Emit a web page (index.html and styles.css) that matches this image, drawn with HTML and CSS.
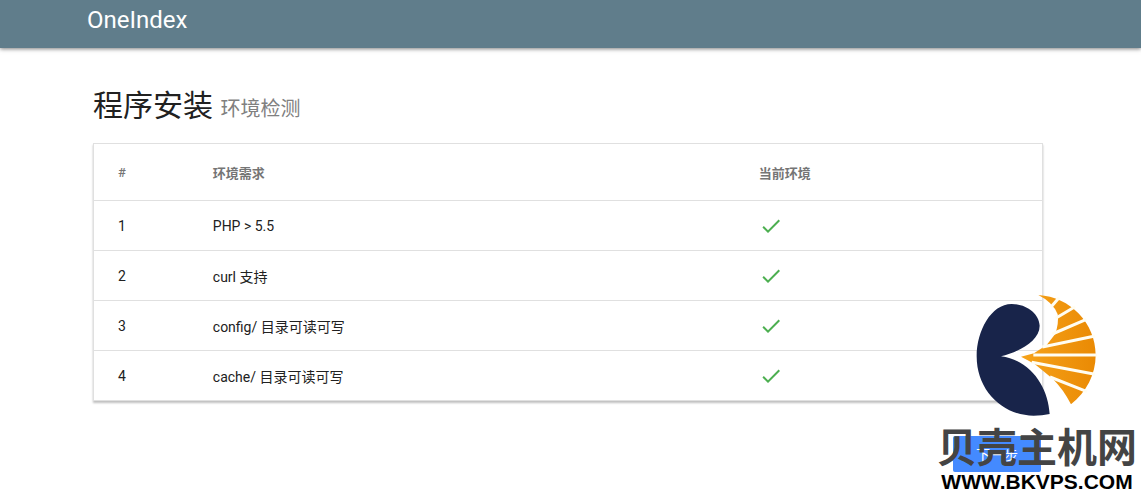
FILE: index.html
```html
<!DOCTYPE html>
<html lang="zh-CN">
<head>
    <meta charset="UTF-8">
    <meta name="viewport" content="width=device-width, initial-scale=1.0">
    <title>OneIndex</title>
    <link rel="stylesheet" href="styles.css">
</head>
<body>
    <header class="toolbar">
        <a href="#" class="title">OneIndex</a>
    </header>

    <main class="container">
        <h1>程序安装 <small>环境检测</small></h1>

        <table class="check-table">
            <thead>
                <tr>
                    <th class="col-num">#</th>
                    <th class="col-name">环境需求</th>
                    <th>当前环境</th>
                </tr>
            </thead>
            <tbody>
                <tr>
                    <td>1</td>
                    <td>PHP &gt; 5.5</td>
                    <td><svg class="icon" viewBox="0 0 24 24"><path d="M9 16.17L4.83 12l-1.42 1.41L9 19 21 7l-1.41-1.41z"/></svg></td>
                </tr>
                <tr>
                    <td>2</td>
                    <td>curl 支持</td>
                    <td><svg class="icon" viewBox="0 0 24 24"><path d="M9 16.17L4.83 12l-1.42 1.41L9 19 21 7l-1.41-1.41z"/></svg></td>
                </tr>
                <tr>
                    <td>3</td>
                    <td>config/ 目录可读可写</td>
                    <td><svg class="icon" viewBox="0 0 24 24"><path d="M9 16.17L4.83 12l-1.42 1.41L9 19 21 7l-1.41-1.41z"/></svg></td>
                </tr>
                <tr>
                    <td>4</td>
                    <td>cache/ 目录可读可写</td>
                    <td><svg class="icon" viewBox="0 0 24 24"><path d="M9 16.17L4.83 12l-1.42 1.41L9 19 21 7l-1.41-1.41z"/></svg></td>
                </tr>
            </tbody>
        </table>

        <div class="actions">
            <button type="button" class="btn">下一步</button>
        </div>
    </main>

    <!-- site watermark -->
    <div class="watermark">
        <svg class="watermark-logo" viewBox="0 0 420 420">
            <defs>
                <linearGradient id="shell" x1="0" y1="0" x2="1" y2="0">
                    <stop offset="0" stop-color="#f6a31a"/>
                    <stop offset="1" stop-color="#ea8a04"/>
                </linearGradient>
            </defs>
            <path fill="#18244a" d="M108 214C158 201 224 170 224 122C222 84 182 57 140 57C78 57 35 138 35 214C35 318 114 392 206 392Q232 392 254 387C250 310 200 226 108 214Z"/>
            <path fill="url(#shell)" d="M220 30C316 36 392 114 392 210C392 268 364 322 318 358Q296 314 263 281L208 236L168 215L207 205L245 180L270 148Q282 118 278 88Q264 52 220 30Z"/>
            <path stroke="#fffdf2" stroke-width="9" fill="none" d="M258 66L282 38M272 100L330 65M262 147L364 103M232 186L390 153M205 210H396M200 232L390 268M255 276L366 320"/>
        </svg>
        <div class="watermark-name">贝壳主机网</div>
        <div class="watermark-url">WWW.BKVPS.COM</div>
    </div>
</body>
</html>
```

FILE: styles.css
```css
body {
    margin: 0;
    font-family: Roboto, "Noto Sans CJK SC", sans-serif;
    font-size: 14px;
    color: #212121;
    background-color: #fff;
}
.toolbar {
    height: 48px;
    padding: 0 87px;
    background-color: #607d8b;
    box-shadow: 0 1px 4px rgba(0,0,0,0.5);
}
.title {
    font-size: 24px;
    line-height: 40px;
    color: #fff;
    text-decoration: none;
}
.container {
    margin: 0 98px 0 93px;
    padding-top: 34px;
}
h1 {
    margin: 0 0 13px;
    font-size: 30px;
    line-height: 48px;
    font-weight: 400;
}
h1 small {
    font-size: 20px;
    line-height: 20px;
    color: #808080;
}
.check-table {
    width: 100%;
    table-layout: fixed;
    border-collapse: separate;
    border-spacing: 0;
    border: 1px solid #e0e0e0;
    border-bottom: none;
    box-sizing: border-box;
    box-shadow: 0 2px 2px rgba(0,0,0,0.25);
}
.check-table th,
.check-table td {
    box-sizing: border-box;
    height: 50px;
    padding: 0 24px;
    text-align: left;
    border-bottom: 1px solid #e0e0e0;
}
.check-table th {
    height: 57px;
    font-size: 13px;
    font-weight: 700;
    color: #757575;
}
.check-table .col-num {
    width: 10%;
    font-weight: 500;
}
.check-table .col-name {
    width: 57.6%;
}
.icon {
    display: block;
    width: 24px;
    height: 24px;
    fill: #4caf50;
}
.actions {
    display: flex;
    justify-content: flex-end;
    padding: 35px 2px 0 0;
}
.btn {
    min-width: 88px;
    height: 36px;
    padding: 0 16px;
    border: none;
    border-radius: 2px;
    font-family: inherit;
    font-size: 14px;
    color: #fff;
    background-color: #448aff;
    cursor: pointer;
}
.watermark {
    position: absolute;
    top: 285px;
    right: 3px;
    width: 202px;
    text-align: center;
    pointer-events: none;
}
.watermark-logo {
    display: block;
    width: 140px;
    height: 140px;
    margin-left: 29px;
}
.watermark-name {
    font-size: 40px;
    line-height: 48px;
    font-weight: 700;
    white-space: nowrap;
    color: #444;
}
.watermark-url {
    font-family: "Liberation Sans", Arial, sans-serif;
    font-size: 21px;
    line-height: 18px;
    font-weight: 700;
    white-space: nowrap;
    color: #000;
}
```
